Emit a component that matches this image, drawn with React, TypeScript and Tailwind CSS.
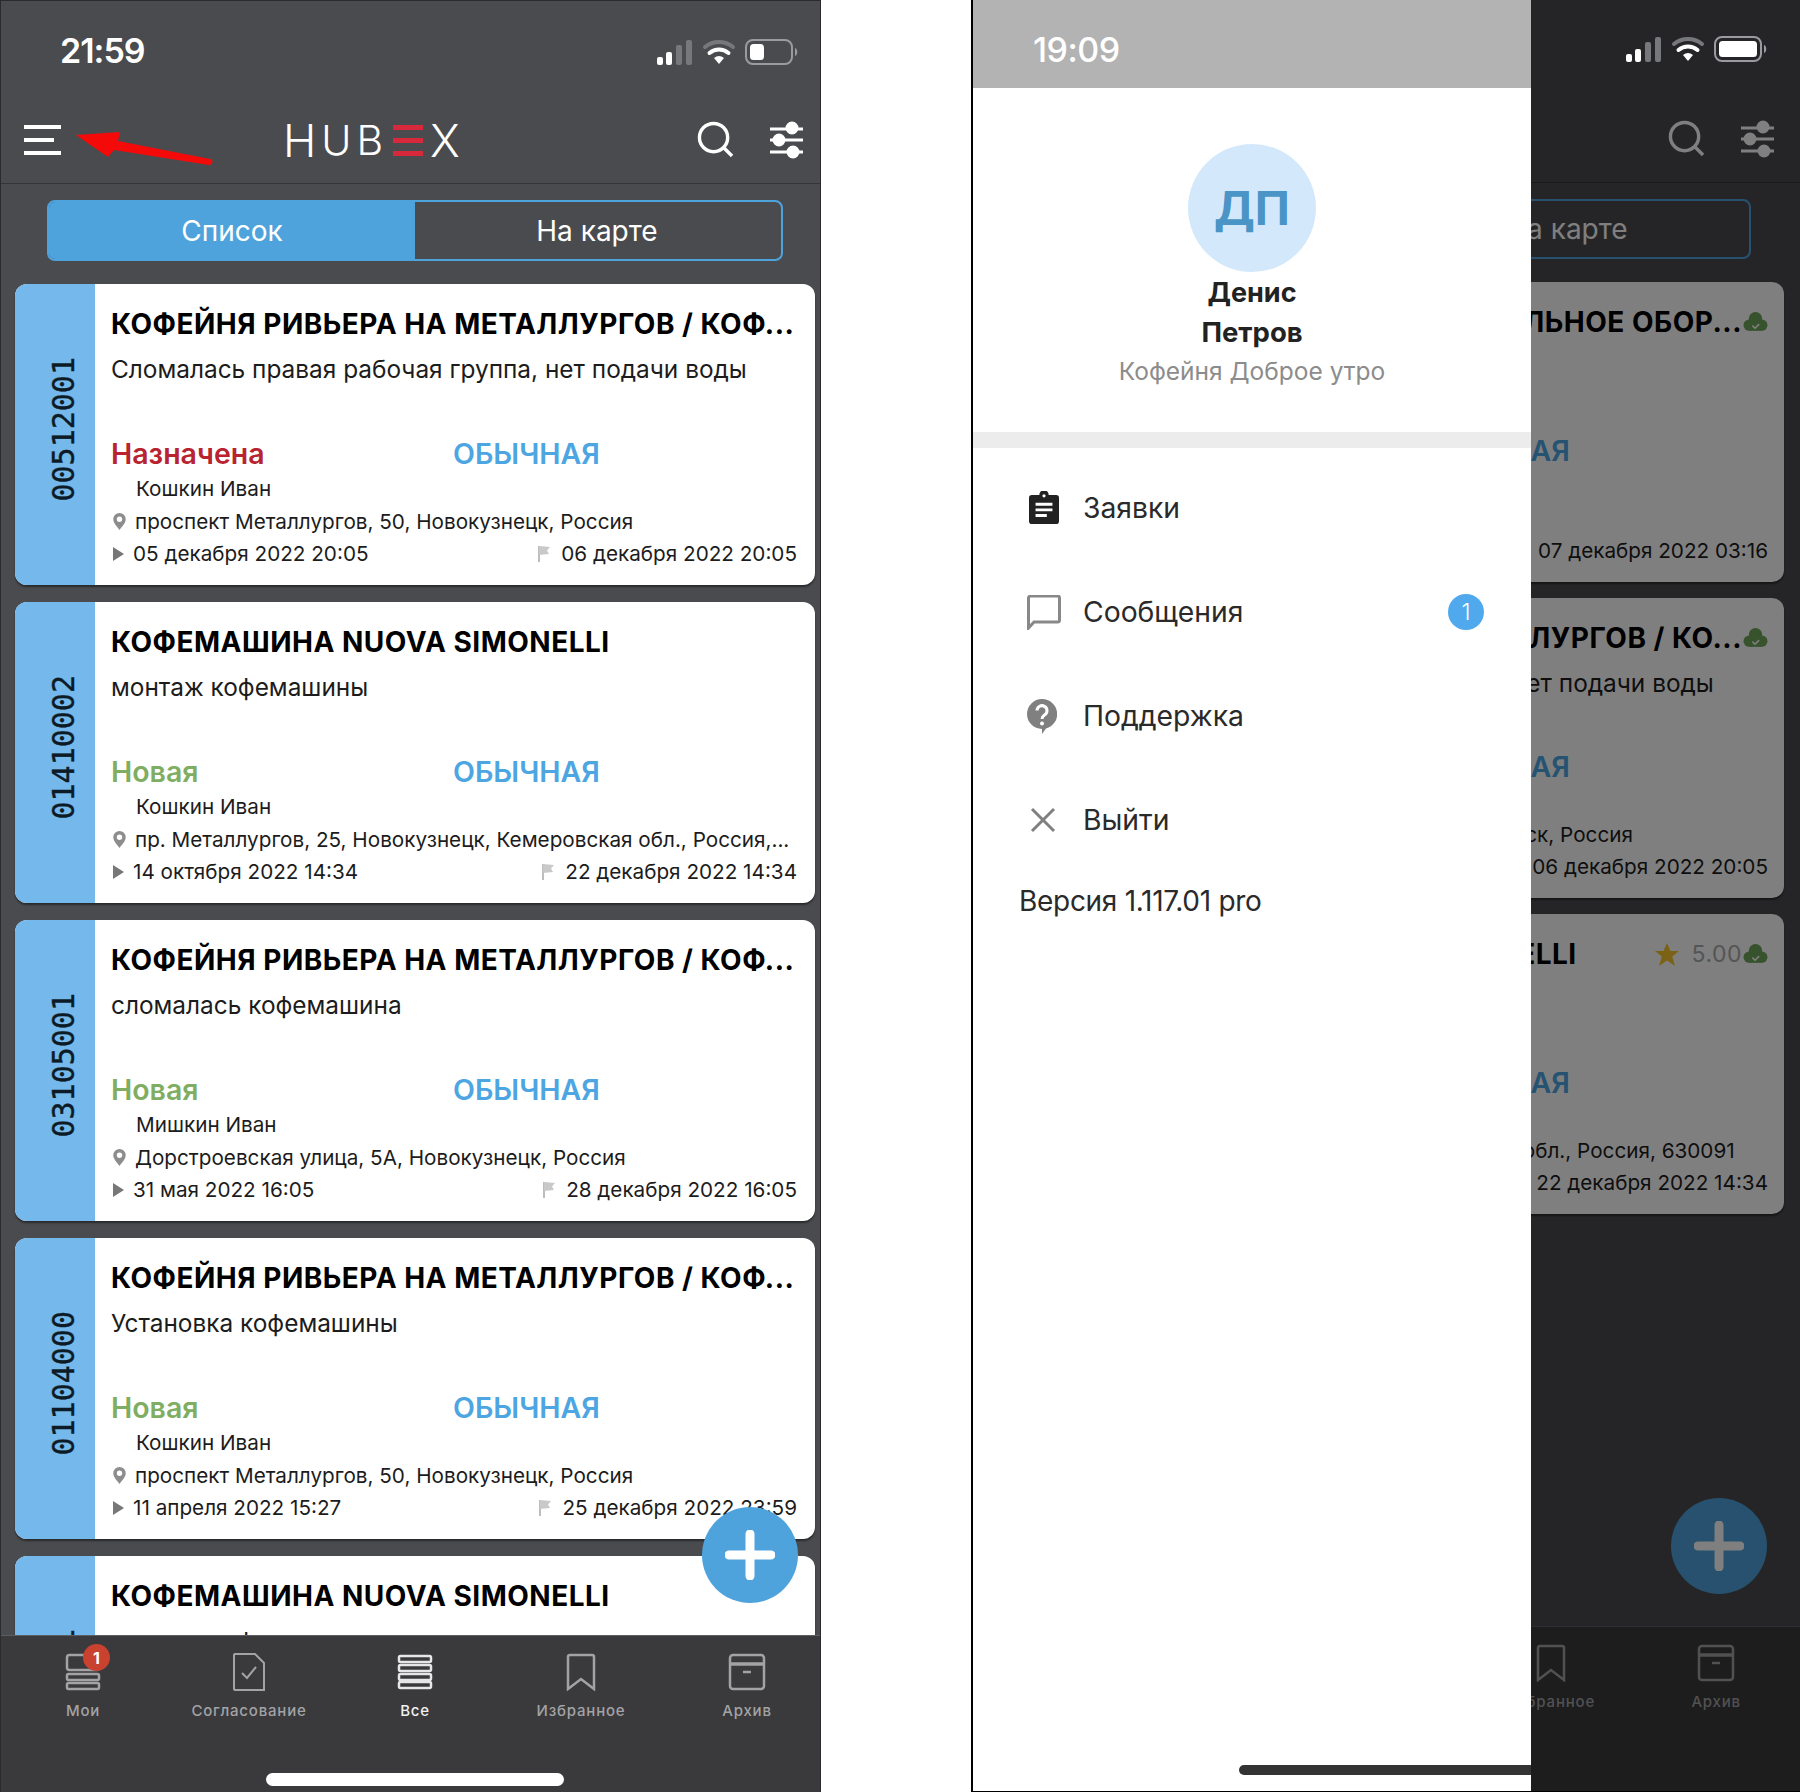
const font = { fontFamily: "Inter, 'Noto Sans', sans-serif" };

type Job = {
  num?: string;
  title: string;
  desc: string;
  status: string;
  statusClass: string;
  person: string;
  address: string;
  start: string;
  end: string;
  extra?: "cloud" | "rating";
  alignEnd?: boolean;
};

const leftJobs: Job[] = [
  {
    num: "00512001",
    title: "КОФЕЙНЯ РИВЬЕРА НА МЕТАЛЛУРГОВ / КОФ...",
    desc: "Сломалась правая рабочая группа, нет подачи воды",
    status: "Назначена",
    statusClass: "text-[#b8232f]",
    person: "Кошкин Иван",
    address: "проспект Металлургов, 50, Новокузнецк, Россия",
    start: "05 декабря 2022 20:05",
    end: "06 декабря 2022 20:05",
  },
  {
    num: "01410002",
    title: "КОФЕМАШИНА NUOVA SIMONELLI",
    desc: "монтаж кофемашины",
    status: "Новая",
    statusClass: "text-[#7fae62]",
    person: "Кошкин Иван",
    address: "пр. Металлургов, 25, Новокузнецк, Кемеровская обл., Россия,...",
    start: "14 октября 2022 14:34",
    end: "22 декабря 2022 14:34",
  },
  {
    num: "03105001",
    title: "КОФЕЙНЯ РИВЬЕРА НА МЕТАЛЛУРГОВ / КОФ...",
    desc: "сломалась кофемашина",
    status: "Новая",
    statusClass: "text-[#7fae62]",
    person: "Мишкин Иван",
    address: "Дорстроевская улица, 5А, Новокузнецк, Россия",
    start: "31 мая 2022 16:05",
    end: "28 декабря 2022 16:05",
  },
  {
    num: "01104000",
    title: "КОФЕЙНЯ РИВЬЕРА НА МЕТАЛЛУРГОВ / КОФ...",
    desc: "Установка кофемашины",
    status: "Новая",
    statusClass: "text-[#7fae62]",
    person: "Кошкин Иван",
    address: "проспект Металлургов, 50, Новокузнецк, Россия",
    start: "11 апреля 2022 15:27",
    end: "25 декабря 2022 23:59",
  },
  {
    num: "01210001",
    title: "КОФЕМАШИНА NUOVA SIMONELLI",
    desc: "монтаж кофемашины",
    status: "Новая",
    statusClass: "text-[#7fae62]",
    person: "Кошкин Иван",
    address: "проспект Металлургов, 50, Новокузнецк, Россия",
    start: "11 апреля 2022 15:27",
    end: "25 декабря 2022 23:59",
  },
];

const rightJobs: Job[] = [
  {
    title: "ТОРГОВОЕ ХОЛОДИЛЬНОЕ ОБОР...",
    desc: "Не работает",
    status: "Новая",
    statusClass: "text-[#7fae62]",
    person: "Кошкин Иван",
    address: "Новокузнецк",
    start: "05 декабря 2022 03:16",
    end: "07 декабря 2022 03:16",
    extra: "cloud",
    alignEnd: true,
  },
  {
    title: "КОФЕЙНЯ РИВЬЕРА НА МЕТАЛЛУРГОВ / КО...",
    desc: "Сломалась правая рабочая группа, нет подачи воды",
    status: "Назначена",
    statusClass: "text-[#b8232f]",
    person: "Кошкин Иван",
    address: "проспект Металлургов, 150/2, Новосибирск, Россия",
    start: "05 декабря 2022 20:05",
    end: "06 декабря 2022 20:05",
    extra: "cloud",
    alignEnd: true,
  },
  {
    title: "КОФЕМАШИНА NUOVA SIMONELLI",
    desc: "монтаж кофемашины",
    status: "Новая",
    statusClass: "text-[#7fae62]",
    person: "Кошкин Иван",
    address: "ул. Мира, 5, р.п. Линёво, Новосибирская обл., Россия, 630091",
    start: "14 октября 2022 14:34",
    end: "22 декабря 2022 14:34",
    extra: "rating",
  },
];

function StatusIcons({ full }: { full?: boolean }) {
  return (
    <svg width="142" height="28" viewBox="0 0 142 28" fill="none">
      <rect x="0" y="19" width="6" height="8" rx="2" fill="#fff" />
      <rect x="9" y="14" width="6" height="13" rx="2" fill="#fff" />
      <rect x="19" y="7" width="6" height="20" rx="2" fill="#77787b" />
      <rect x="29" y="2" width="6" height="25" rx="2" fill="#77787b" />
      <path d="M48 9a22 22 0 0 1 28 0" stroke="#77787b" strokeWidth="4" strokeLinecap="round" />
      <path d="M52.500 15a15 15 0 0 1 19 0" stroke="#fff" strokeWidth="4" strokeLinecap="round" />
      <path d="M57 20a8 8 0 0 1 10 0l-5 6z" fill="#fff" />
      <rect x="89" y="2" width="46" height="24" rx="7" stroke="#9a9b9e" strokeWidth="2" />
      <rect x="93" y="6" width={full ? 38 : 14} height="16" rx="3.500" fill="#fff" />
      <path d="M138 10c3 1 3 7 0 8z" fill="#9a9b9e" />
    </svg>
  );
}

function Logo() {
  return (
    <div className="mt-[2px] flex h-[34px] items-center text-[45px] leading-none tracking-[5px] text-white [font-weight:350]">
      <span>H</span>
      <span className="text-[41px]">UB</span>
      <span className="ml-[5px] mr-[7px] flex h-[31px] w-[30px] flex-col justify-between">
        <span className="h-[5px] bg-[#d8293c]" />
        <span className="h-[5px] bg-[#d8293c]" />
        <span className="h-[5px] bg-[#d8293c]" />
      </span>
      <span>X</span>
    </div>
  );
}

function Sliders() {
  return (
    <svg width="35" height="38" viewBox="0 0 35 38" fill="none" stroke="#fff" strokeWidth="3">
      <path d="M1 8h33M1 19h33M1 31h33" />
      <circle cx="23" cy="7" r="5" fill="#fff" />
      <circle cx="10" cy="19" r="5" fill="#fff" />
      <circle cx="24" cy="31" r="5" fill="#fff" />
    </svg>
  );
}

function SearchIcon() {
  return (
    <svg width="37" height="37" viewBox="0 0 38 38" fill="none" stroke="#fff" strokeWidth="3.500">
      <circle cx="17" cy="17" r="14.500" />
      <path d="M27 27l9 9" />
    </svg>
  );
}

function Pin() {
  return (
    <svg width="13" height="17" viewBox="0 0 13 17" className="shrink-0">
      <path d="M6.500 0a6.200 6.200 0 0 1 6.200 6.200c0 4-4 7.500-6.200 10.800C4.300 13.700.3 10.200.3 6.200A6.200 6.200 0 0 1 6.500 0zm0 3.500a2.700 2.700 0 1 0 0 5.400 2.700 2.700 0 0 0 0-5.400z" fill="#8d8d8d" />
    </svg>
  );
}

function Flag() {
  return (
    <svg width="14" height="18" viewBox="0 0 14 18" className="shrink-0" fill="none">
      <path d="M2 1v16" stroke="#bdbdbd" strokeWidth="2" />
      <path d="M2 1l11 1-3 3.500 2 3.500-10 1z" fill="#c9c9c9" />
    </svg>
  );
}

function Cloud({ className }: { className: string }) {
  return (
    <svg viewBox="0 0 24 20" className={className}>
      <circle cx="12" cy="7" r="6.500" fill="#6fa65a" />
      <circle cx="6" cy="13" r="5.500" fill="#6fa65a" />
      <circle cx="18" cy="13" r="5.500" fill="#6fa65a" />
      <rect x="6" y="11" width="12" height="7.500" fill="#6fa65a" />
      <path d="M9 13.500l2.500 2.500 4-4" fill="none" stroke="#fff" strokeWidth="1.500" />
    </svg>
  );
}

type CardProps = {
  job: Job;
  heightClass: string;
  stripClass: string;
  bodyClass: string;
  statusGapClass: string;
  statusColClass: string;
};

function JobCard({ job, heightClass, stripClass, bodyClass, statusGapClass, statusColClass }: CardProps) {
  return (
    <div className={`flex shrink-0 overflow-hidden rounded-[12px] bg-white text-black shadow-[0_2px_2px_rgba(0,0,0,0.45)] ${heightClass}`}>
      <div className={`flex shrink-0 items-center justify-center bg-[#75b8ec] pb-[10px] pl-[18px] ${stripClass}`}>
        <span
          className="rotate-180 text-[30px] leading-none text-[#0c1b26] [-webkit-text-stroke:0.4px_#0c1b26] [writing-mode:vertical-rl]"
          style={{ fontFamily: "'DejaVu Sans Mono', monospace" }}
        >
          {job.num}
        </span>
      </div>
      <div className={`min-w-0 flex-1 pl-[16px] pt-[21px] ${bodyClass}`}>
        <div className="flex h-[38px] items-center">
          <div className={`min-w-0 flex-1 truncate text-[28px] font-bold tracking-[0.5px] ${job.alignEnd ? "text-right" : ""}`}>
            {job.title}
          </div>
          {job.extra === "rating" && (
            <div className="flex items-center">
              <svg viewBox="0 0 24 23" className="mr-[13px] h-[23px] w-[24px]">
                <path d="M12 0l3.500 8H24l-6.800 5.500L20 23l-8-5.500L4 23l2.800-9.500L0 8h8.500z" fill="#f6c428" />
              </svg>
              <span className="text-[23px] tracking-[0.5px] text-[#aaaaaa]">5.00</span>
            </div>
          )}
          {job.extra && <Cloud className="ml-[1px] h-[22px] w-[25px] shrink-0" />}
        </div>
        <div className="mt-[8px] h-[36px] truncate text-[24.400px] leading-[36px] text-[#1c1c1c]">{job.desc}</div>
        <div className={`flex h-[40px] items-center font-semibold ${statusGapClass}`}>
          <div className={`text-[28.500px] ${statusColClass} ${job.statusClass}`}>{job.status}</div>
          <div className="text-[28.500px] text-[#4da6e2]">ОБЫЧНАЯ</div>
        </div>
        <div className="ml-[25px] mt-[1px] h-[28px] text-[20.700px] leading-[28px] text-[#1c1c1c]">{job.person}</div>
        <div className="mt-[5px] flex h-[27px] items-center text-[20.700px] leading-[27px] text-[#1c1c1c]">
          <span className="ml-[2px] mr-[9px]"><Pin /></span>
          <span className="truncate">{job.address}</span>
        </div>
        <div className="mt-[5px] flex h-[27px] items-center text-[20.700px] leading-[27px] text-[#1c1c1c]">
          <svg width="11" height="14" viewBox="0 0 11 14" className="mr-[9px] ml-[2px] shrink-0">
            <path d="M0 0l11 7-11 7z" fill="#777" />
          </svg>
          <span className="flex-1 truncate">{job.start}</span>
          <span className="mr-[10px]"><Flag /></span>
          <span>{job.end}</span>
        </div>
      </div>
    </div>
  );
}

const tabs = ["Мои", "Согласование", "Все", "Избранное", "Архив"];

function TabIcon({ index, stroke }: { index: number; stroke: string }) {
  if (index === 0)
    return (
      <svg width="36" height="38" viewBox="0 0 36 38" fill="none" stroke={stroke} strokeWidth="2.500">
        <rect x="2" y="2" width="32" height="15" rx="2.500" />
        <rect x="2" y="21" width="32" height="6" rx="1.500" />
        <rect x="2" y="30" width="32" height="6" rx="1.500" />
      </svg>
    );
  if (index === 1)
    return (
      <svg width="34" height="38" viewBox="0 0 34 38" fill="none" stroke={stroke} strokeWidth="2">
        <path d="M3 1h20l9 9v27H3a2 2 0 0 1-1-1V2a2 2 0 0 1 1-1z" />
        <path d="M10 20l5 5 9-11" />
      </svg>
    );
  if (index === 2)
    return (
      <svg width="36" height="36" viewBox="0 0 36 36" fill="none" stroke={stroke} strokeWidth="2.500">
        <rect x="2" y="2" width="32" height="6" rx="1.500" />
        <rect x="2" y="11" width="32" height="6" rx="1.500" />
        <rect x="2" y="20" width="32" height="6" rx="1.500" />
        <rect x="2" y="28" width="32" height="6" rx="1.500" />
      </svg>
    );
  if (index === 3)
    return (
      <svg width="30" height="38" viewBox="0 0 30 38" fill="none" stroke={stroke} strokeWidth="2.500">
        <path d="M2 36V4a2 2 0 0 1 2-2h22a2 2 0 0 1 2 2v32L15 26z" />
      </svg>
    );
  return (
    <svg width="38" height="38" viewBox="0 0 38 38" fill="none" stroke={stroke} strokeWidth="2.500">
      <rect x="2" y="2" width="34" height="34" rx="3" />
      <path d="M2 11h34" strokeWidth="3.500" />
      <path d="M15 19h8" />
    </svg>
  );
}

function TabBar({ columnClass, startClass, heightClass }: { columnClass: string; startClass: string; heightClass: string }) {
  return (
    <div className={`flex shrink-0 border-t border-[#5d5e62] bg-[#3a3a3d] pt-[16px] ${startClass} ${heightClass}`}>
      {tabs.map((tab, i) => {
        const active = i === 2;
        return (
          <div key={tab} className={`relative flex shrink-0 flex-col items-center ${columnClass}`}>
            <div className="flex h-[40px] items-center">
              <TabIcon index={i} stroke={active ? "#e6e6e6" : "#a3a3a5"} />
            </div>
            {i === 0 && (
              <span className="absolute left-[83px] top-[-8px] flex h-[27px] w-[27px] items-center justify-center rounded-full bg-[#c9412f] text-[16px] font-bold text-white">
                1
              </span>
            )}
            <span className={`mt-[9px] text-[15px] font-medium leading-[20px] tracking-[0.8px] ${active ? "text-[#f0f0f0]" : "text-[#a3a3a5]"}`}>
              {tab}
            </span>
          </div>
        );
      })}
    </div>
  );
}

function Fab({ className }: { className: string }) {
  return (
    <div className={`absolute flex h-[96px] w-[96px] items-center justify-center rounded-full bg-[#4fa3dc] ${className}`}>
      <svg width="50" height="50" viewBox="0 0 50 50">
        <path d="M25 4v42M4 25h42" stroke="#fff" strokeWidth="9" strokeLinecap="round" />
      </svg>
    </div>
  );
}

function LeftPhone() {
  return (
    <div className="relative flex h-[1792px] w-[821px] shrink-0 flex-col overflow-hidden border-x border-t border-[#2b2b2d] bg-[#4a4b4f]">
      <div className="flex h-[95px] shrink-0 items-end justify-between pb-[25px] pl-[59px] pr-[21px]">
        <span className="text-[34px] font-semibold leading-[40px] tracking-[-1px] text-white">21:59</span>
        <span className="mb-[5px]"><StatusIcons /></span>
      </div>
      <div className="flex h-[88px] shrink-0 items-center justify-between border-b border-[#343537] pl-[23px] pr-[16px]">
        <div className="flex items-center">
          <div className="flex h-[30px] w-[37px] flex-col justify-between">
            <span className="h-[4px] bg-white" />
            <span className="h-[4px] w-[30px] bg-white" />
            <span className="h-[4px] bg-white" />
          </div>
          <div className="ml-[222px]"><Logo /></div>
        </div>
        <div className="flex items-center gap-[35px]">
          <SearchIcon />
          <Sliders />
        </div>
      </div>
      <div className="ml-[46px] mt-[16px] flex h-[61px] w-[736px] shrink-0 overflow-hidden rounded-[8px] border-2 border-[#4fa3dc] text-[28px]">
        <div className="flex w-[366px] items-center justify-center bg-[#4fa3dc] text-white">Список</div>
        <div className="flex flex-1 items-center justify-center pr-[2px] text-white">На карте</div>
      </div>
      <div className="mt-[23px] flex min-h-0 flex-1 flex-col gap-[17px] overflow-hidden pl-[14px] pr-[5px]">
        {leftJobs.map((job) => (
          <JobCard
            key={job.num}
            job={job}
            heightClass="h-[301px]"
            stripClass="w-[80px]"
            bodyClass="pr-[18px]"
            statusGapClass="mt-[47px]"
            statusColClass="w-[342px]"
          />
        ))}
      </div>
      <TabBar columnClass="w-[166px]" startClass="-ml-[1px]" heightClass="h-[157px]" />
      <Fab className="left-[701px] top-[1506px]" />
      <div className="absolute bottom-[6px] left-[265px] h-[13px] w-[298px] rounded-full bg-white" />
      {/* annotation arrow */}
      <svg className="absolute left-0 top-0" width="230" height="180" viewBox="0 0 230 180">
        <path d="M75 134l44-3-2 9 92 18c4 1 3 6-1 6l-95-15-6 7z" fill="#f50a0a" />
      </svg>
    </div>
  );
}

function MenuRow({ icon, label, badge }: { icon: React.ReactNode; label: string; badge?: string }) {
  return (
    <div className="flex h-[104px] items-center pl-[54px] pr-[47px]">
      <div className="flex w-[56px] shrink-0">{icon}</div>
      <span className="flex-1 text-[28.300px] text-[#2a2a2a]">{label}</span>
      {badge && (
        <span className="flex h-[36px] w-[36px] items-center justify-center rounded-full bg-[#4fa9ec] text-[23px] font-light text-white">
          {badge}
        </span>
      )}
    </div>
  );
}

function Drawer() {
  return (
    <div className="absolute inset-y-0 left-0 z-20 flex w-[560px] flex-col overflow-hidden border-l-2 border-black bg-white" style={font}>
      <div className="flex h-[88px] shrink-0 items-center bg-[#b3b3b3] pl-[60px] pt-[11px] text-[34px] font-medium tracking-[-0.5px] text-white">
        19:09
      </div>
      <div className="flex h-[344px] shrink-0 flex-col items-center pt-[56px] text-center">
        <div className="flex h-[128px] w-[128px] items-center justify-center rounded-full bg-[#d3e9fb] text-[47px] font-bold text-[#4a94c6]">
          ДП
        </div>
        <div className="mt-[1px] text-[27px] font-bold leading-[40px] text-[#222]">Денис</div>
        <div className="text-[27.500px] font-bold leading-[39px] text-[#222]">Петров</div>
        <div className="-mt-[1px] text-[24.500px] leading-[40px] text-[#8c8c8c]">Кофейня Доброе утро</div>
      </div>
      <div className="h-[16px] shrink-0 bg-[#ececec]" />
      <div className="pt-[8px]">
        <MenuRow
          label="Заявки"
          icon={
            <svg width="30" height="34" viewBox="0 0 32 34" className="ml-[2px]">
              <path d="M3 3h8a5 5 0 0 1 10 0h8a3 3 0 0 1 3 3v25a3 3 0 0 1-3 3H3a3 3 0 0 1-3-3V6a3 3 0 0 1 3-3z" fill="#222" />
              <path d="M7 13h18M7 19h18M7 25h12" stroke="#fff" strokeWidth="3" />
              <circle cx="16" cy="4" r="1.700" fill="#fff" />
            </svg>
          }
        />
        <MenuRow
          label="Сообщения"
          badge="1"
          icon={
            <svg width="34" height="35" viewBox="0 0 34 35" fill="none">
              <path d="M1.500 33V3a2 2 0 0 1 2-2h27a2 2 0 0 1 2 2v22a2 2 0 0 1-2 2H7z" stroke="#888" strokeWidth="3" />
            </svg>
          }
        />
        <MenuRow
          label="Поддержка"
          icon={
            <svg width="30" height="35" viewBox="0 0 30 35">
              <path d="M15 0a15 15 0 0 1 4 29.500L15 35v-5A15 15 0 0 1 15 0z" fill="#808080" />
              <path d="M10 11.500a5 5 0 1 1 7.500 4.500c-1.500 1-2.500 2-2.500 4" fill="none" stroke="#fff" strokeWidth="3" />
              <circle cx="15" cy="24.500" r="2" fill="#fff" />
            </svg>
          }
        />
        <MenuRow
          label="Выйти"
          icon={
            <svg width="26" height="26" viewBox="0 0 26 26" className="ml-[3px]">
              <path d="M2 2l22 22M24 2L2 24" stroke="#808080" strokeWidth="3" />
            </svg>
          }
        />
        <div className="flex h-[58px] items-center pl-[46px] text-[28px] tracking-[-0.3px] text-[#2a2a2a]">Версия 1.117.01 pro</div>
      </div>
      <div className="absolute bottom-[16px] left-[266px] h-[10px] w-[300px] rounded-full bg-[#333]" />
    </div>
  );
}

function RightPhone() {
  return (
    <div className="relative ml-[150px] flex h-[1792px] w-[829px] shrink-0 flex-col overflow-hidden border-b border-black bg-[#4a4b4f]">
      {/* status bar stays bright above the dim layer */}
      <div className="relative z-10 flex h-[95px] shrink-0 items-end justify-end pb-[32px] pr-[32px]">
        <StatusIcons full />
      </div>
      <div className="flex h-[88px] shrink-0 items-center justify-end gap-[35px] border-b border-[#343537] pr-[25px]">
        <SearchIcon />
        <Sliders />
      </div>
      <div className="ml-[40px] mt-[16px] flex h-[60px] w-[740px] shrink-0 overflow-hidden rounded-[8px] border-2 border-[#4fa3dc] text-[28px]">
        <div className="flex w-[372px] items-center justify-center bg-[#4fa3dc] text-white">Список</div>
        <div className="flex flex-1 items-center justify-center text-white">На карте</div>
      </div>
      <div className="mt-[23px] flex min-h-0 flex-1 flex-col gap-[16px] overflow-hidden pl-[5px] pr-[16px]">
        {rightJobs.map((job) => (
          <JobCard
            key={job.title}
            job={job}
            heightClass="h-[300px]"
            stripClass="w-[86px]"
            bodyClass="pr-[16px]"
            statusGapClass="mt-[46px]"
            statusColClass="w-[345px]"
          />
        ))}
      </div>
      <TabBar columnClass="w-[165.600px]" startClass="" heightClass="h-[165px]" />
      <Fab className="left-[700px] top-[1498px]" />
      <div className="absolute inset-0 bg-black/50" />
      <Drawer />
    </div>
  );
}

export default function App() {
  return (
    <div className="flex h-[1792px] w-[1800px] overflow-hidden bg-white" style={font}>
      <LeftPhone />
      <RightPhone />
    </div>
  );
}
